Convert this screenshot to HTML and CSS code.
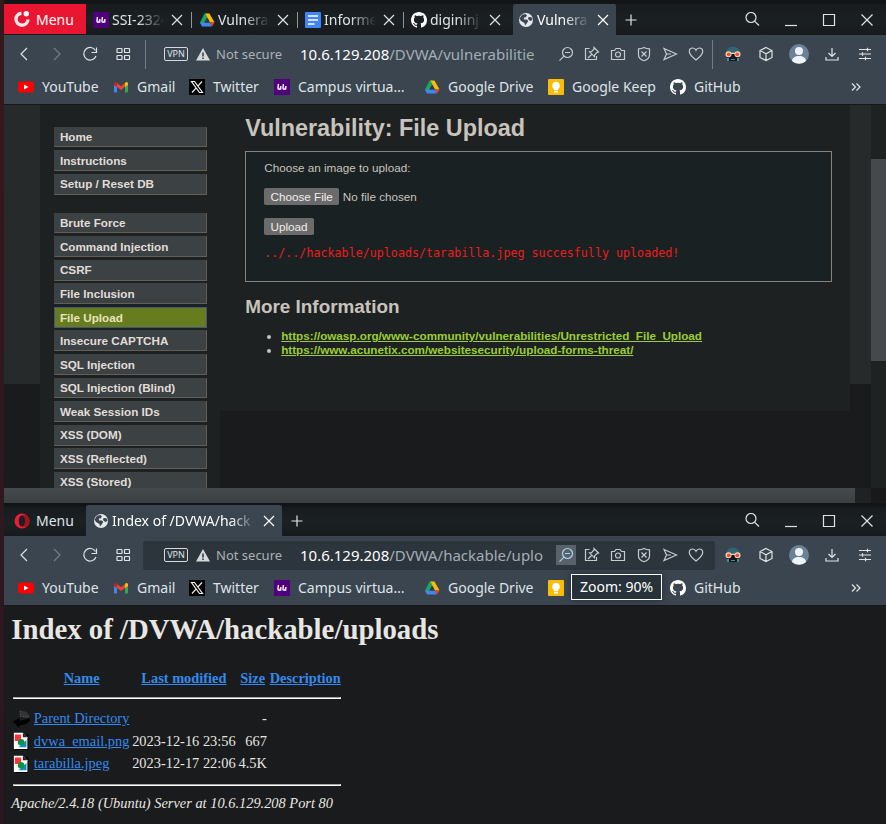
FILE: index.html
```html
<!DOCTYPE html>
<html lang="en">
<head>
<meta charset="utf-8">
<title>Vulnerability: File Upload</title>
<link rel="stylesheet" href="styles.css">
</head>
<body>
<svg class="sprite" aria-hidden="true">
  <symbol id="close" viewBox="0 0 16 16"><path d="M3 3l10 10M13 3L3 13"/></symbol>
  <symbol id="plus" viewBox="0 0 16 16"><path d="M8 2.500v11M2.500 8h11"/></symbol>
  <symbol id="search" viewBox="0 0 16 16"><circle cx="6" cy="5.500" r="5"/><path d="M9.800 9.300L14 13.500"/></symbol>
  <symbol id="min" viewBox="0 0 16 16"><path d="M2 13.500h12"/></symbol>
  <symbol id="max" viewBox="0 0 16 16"><path d="M2.500 2.500h11v11h-11z"/></symbol>
  <symbol id="wclose" viewBox="0 0 16 16"><path d="M2.500 2.500l11 11M13.500 2.500l-11 11"/></symbol>
  <symbol id="back" viewBox="0 0 16 16"><path d="M11 2L5 8l6 6"/></symbol>
  <symbol id="fwd" viewBox="0 0 16 16"><path d="M5 2l6 6-6 6"/></symbol>
  <symbol id="reload" viewBox="0 0 16 16"><path d="M13.500 4.500A6.300 6.300 0 1 0 14 10"/><path d="M14.500 1.500v5h-5"/></symbol>
  <symbol id="grid" viewBox="0 0 16 16"><rect x="2" y="2.500" width="5" height="4" rx=".6"/><rect x="9.500" y="2.500" width="5" height="4" rx=".6"/><rect x="2" y="9.500" width="5" height="4" rx=".6"/><rect x="9.500" y="9.500" width="5" height="4" rx=".6"/></symbol>
  <symbol id="warn" viewBox="0 0 16 16"><path fill="#d5d9db" stroke="none" fill-rule="evenodd" d="M8 2l7 12.500H1zM7.200 6.500v4h1.600v-4zM7.200 11.500v1.600h1.600v-1.600z"/></symbol>
  <symbol id="zoomout" viewBox="0 0 16 16"><circle cx="9.500" cy="6.500" r="5"/><path d="M6 10.200L1.500 14.700M7 6.500h5"/></symbol>
  <symbol id="pin" viewBox="0 0 16 16"><path d="M5.500 2.500h-4v11h11v-3.500"/><path d="M10 1.500l4.500 4.500-1.300.3-2.500 2.500-.2 2-5-5 2-.2L10 3zM7.800 8.300L4 12"/></symbol>
  <symbol id="camera" viewBox="0 0 16 16"><path d="M1.500 4.500h3l1.500-2h4l1.500 2h3v9h-13z"/><circle cx="8" cy="8.500" r="2.500"/></symbol>
  <symbol id="shield" viewBox="0 0 16 16"><path d="M8 1.500c2 1 4 1.300 5.500 1.300V9c0 3-2.500 4.700-5.500 5.700C5 13.700 2.500 12 2.500 9V2.800C4 2.800 6 2.500 8 1.500z"/><path d="M5.500 5.500l5 5M10.500 5.500l-5 5"/></symbol>
  <symbol id="send" viewBox="0 0 16 16"><path d="M2 2.500L14.500 8 2 13.500 4.500 8zM4.500 8H9"/></symbol>
  <symbol id="heart" viewBox="0 0 16 16"><path d="M8 14C3.500 10.500 1.300 8.200 1.300 5.500 1.300 3.300 2.900 2 4.700 2 6.300 2 7.400 2.900 8 4.200 8.600 2.900 9.700 2 11.300 2c1.800 0 3.400 1.300 3.400 3.500C14.700 8.200 12.500 10.500 8 14z"/></symbol>
  <symbol id="mask" viewBox="0 0 16 16"><g stroke="none"><path fill="#2e6874" d="M1.500 7C1.500 3 4 .8 8 .8S14.500 3 14.500 7z"/><path fill="#16191c" d="M2 6h12v5l-1 4H3l-1-4z"/><circle cx="3.500" cy="8.300" r="3" fill="#f4d7bd"/><circle cx="12.500" cy="8.300" r="3" fill="#f4d7bd"/><circle cx="3.700" cy="8.300" r="1.900" fill="#ee5138"/><circle cx="12.300" cy="8.300" r="1.900" fill="#ee5138"/><path fill="#e9d5c5" d="M6 6.500h4v1.500H6z"/><path fill="#3f8e99" d="M2 12h2v3H2zM12 12h2v3h-2zM6 13h4v1H6z"/></g></symbol>
  <symbol id="cube" viewBox="0 0 16 16"><path d="M8 1.500l6 3v7l-6 3-6-3v-7zM2 4.500l6 3.200 6-3.200M8 7.700v6.800"/></symbol>
  <symbol id="avatar" viewBox="0 0 20 20"><g stroke="none"><circle cx="10" cy="10" r="10" fill="#6c8197"/><circle cx="10" cy="7" r="4" fill="#eef3f8"/><path fill="#eef3f8" d="M3 17c0-3 3-5 7-5s7 2 7 5a10 10 0 0 1-14 0z"/></g></symbol>
  <symbol id="download" viewBox="0 0 16 16"><path d="M8 2v8M4.500 7L8 10.500 11.500 7M2 11v3h12v-3"/></symbol>
  <symbol id="sliders" viewBox="0 0 16 16"><path d="M2 3.500h12M2 8h12M2 12.500h12M10.500 1.800v3.400M5.500 6.300v3.400M8.500 10.800v3.400"/></symbol>
  <symbol id="more" viewBox="0 0 16 16"><path d="M4 4.500L7.500 8 4 11.500M8.500 4.500L12 8l-3.500 3.500"/></symbol>
  <symbol id="globe" viewBox="0 0 16 16"><g stroke="none"><circle cx="8" cy="8" r="7" fill="#e4e8eb"/><path fill="#3a4550" d="M4 2.800L7.500 2 9 3.500 7.500 5.500H5.800L6 7.500H9l1.200 1.500L9 11l-2 2.500L6.500 11 3 9 1.500 6.500zM10.500 5l3 .3 1 2.700-2.300 1L10 7z"/></g></symbol>
  <symbol id="drive" viewBox="0 0 16 16"><g stroke="none"><path fill="#1ea362" d="M5.500 1.500h2.800L10 4.500 3.300 14.500 1 10.500z"/><path fill="#fbbc04" d="M6.500 1.500h4l5 9h-4.600z"/><path fill="#4285f4" d="M3.600 10.500H11l1.800 4H3.200L1 10.800z"/><path fill="#ea4335" d="M11 10.500h4.500l-2.500 4z"/><path fill="#303b45" d="M8 5.500l2.800 5H5.200z"/></g></symbol>
  <symbol id="uoc" viewBox="0 0 16 16"><path fill="#50007c" stroke="none" d="M0 0h16v16H0z"/><path stroke="#f4eff7" stroke-width="1.500" d="M4.400 5L4 9q0 1.300 1.200 1.200Q6.300 10 6.500 8.500M6.900 7l-.3 3.800M9.400 5L9 9q0 1.300 1.200 1.200Q11.300 10 11.500 8.500M11.900 7l-.3 3.800"/></symbol>
  <symbol id="docs" viewBox="0 0 16 16"><rect width="16" height="16" rx="1" fill="#4285f4" stroke="none"/><path stroke="#fff" stroke-width="1.600" d="M3 4h10M3 8h10M3 12h6.500"/></symbol>
  <symbol id="github" viewBox="0 0 16 16"><path fill="#fff" stroke="none" d="M8 0C3.580 0 0 3.580 0 8c0 3.540 2.290 6.530 5.470 7.590.4.070.55-.17.55-.38 0-.19-.01-.82-.01-1.490-2.010.37-2.530-.49-2.690-.94-.09-.23-.48-.94-.82-1.130-.28-.15-.68-.52-.01-.53.63-.01 1.080.58 1.230.82.72 1.210 1.870.87 2.330.66.070-.52.28-.87.51-1.070-1.780-.2-3.640-.89-3.640-3.950 0-.87.31-1.590.82-2.150-.08-.2-.36-1.020.08-2.120 0 0 .67-.21 2.200.82.64-.18 1.320-.27 2-.27s1.360.09 2 .27c1.530-1.040 2.200-.82 2.200-.82.44 1.100.16 1.920.08 2.120.51.56.82 1.270.82 2.150 0 3.070-1.870 3.750-3.650 3.950.29.25.54.73.54 1.480 0 1.070-.01 1.930-.01 2.200 0 .21.15.46.55.38A8 8 0 0 0 16 8c0-4.420-3.580-8-8-8z"/></symbol>
  <symbol id="youtube" viewBox="0 0 16 16"><rect y="2.500" width="16" height="11" rx="2.500" fill="#f00" stroke="none"/><path fill="#fff" stroke="none" d="M6 5.500L10.500 8 6 10.500z"/></symbol>
  <symbol id="gmail" viewBox="0 0 16 16"><g stroke="none"><path fill="#4285f4" d="M1 4h3v9.500H2q-1 0-1-1z"/><path fill="#34a853" d="M12 4h3v8.500q0 1-1 1h-2z"/><path fill="#ea4335" d="M4 4l4 3.200L12 4v4L8 11 4 8z"/><path fill="#c5221f" d="M1 4.500Q1 2.500 3 3l1 1v4L1 6z"/><path fill="#fbbc04" d="M15 4.500Q15 2.500 13 3l-1 1v4l3-2z"/></g></symbol>
  <symbol id="xlogo" viewBox="0 0 16 16"><path fill="#000" stroke="none" d="M0 0h16v16H0z"/><path stroke="#f2f2f2" d="M2.500 2.500h3l8 11h-3zM13 2.500L8.800 7.200M7 9.200L3 13.500"/></symbol>
  <symbol id="keep" viewBox="0 0 16 16"><rect width="16" height="16" rx="1" fill="#fbbc04" stroke="none"/><path fill="#fff" stroke="none" d="M8 2.800a3.900 3.900 0 0 0-2 7.200v1.200h4V10a3.900 3.900 0 0 0-2-7.200zM6 12h4v1.500H6z"/></symbol>
  <symbol id="opera-gx" viewBox="0 0 18 18"><path stroke="#ffe8ea" stroke-width="3.400" d="M8.500 3.200A6 6 0 1 0 15 9.500"/><circle cx="13.300" cy="3.800" r="2.700" fill="#fff" stroke="none"/></symbol>
  <symbol id="opera" viewBox="0 0 18 18"><path fill="#f01c35" stroke="none" fill-rule="evenodd" d="M9 1.500a7.500 7.500 0 1 0 0 15 7.500 7.500 0 0 0 0-15zM9 3.500c2 0 3.200 2.500 3.200 5.500S11 14.500 9 14.500 5.800 12 5.800 9 7 3.500 9 3.500z"/><path fill="#a60f22" stroke="none" d="M9 3.500c3-2 7.500 1 7.500 5.500S12 16.500 9 14.500c2 0 3.200-2.500 3.200-5.500S11 3.500 9 3.500z"/></symbol>
  <symbol id="uparrow" viewBox="0 0 20 22"><path fill="#333" stroke="none" d="M8 2q9 0 10 6l-1 3-9-3z"/><path fill="#000" stroke="none" d="M0 14l7-4v3q7 0 11-4l1 4q-5 5-12 5v3z"/><path stroke="#666" stroke-dasharray="1 2" d="M8 2v6l10 1"/></symbol>
  <symbol id="image" viewBox="0 0 20 22"><path fill="#000" stroke="none" d="M3 4h14v17H3z"/><path fill="#fff" stroke="none" d="M1 2h10l5 5v13H1z"/><path fill="#222" stroke="none" d="M11 2l5 5h-5z"/><path fill="#ff3438" stroke="none" d="M2 4h7v7H2z"/><path fill="#168bc9" stroke="none" d="M15 10v8H6z"/><circle cx="9" cy="12.500" r="3.700" fill="#0b9444" stroke="none"/></symbol>
</svg>

<section class="window window-top" aria-label="File upload window">
  <header class="titlebar">
    <button class="menu menu-red"><svg><use href="#opera-gx"/></svg>Menu</button>
    <div class="tab"><svg><use href="#uoc"/></svg><span>SSI-2324</span><button aria-label="Close tab"><svg><use href="#close"/></svg></button></div>
    <div class="tab"><svg><use href="#drive"/></svg><span>Vulnera</span><button aria-label="Close tab"><svg><use href="#close"/></svg></button></div>
    <div class="tab"><svg><use href="#docs"/></svg><span>Informe</span><button aria-label="Close tab"><svg><use href="#close"/></svg></button></div>
    <div class="tab tab-last"><svg><use href="#github"/></svg><span>digininj</span><button aria-label="Close tab"><svg><use href="#close"/></svg></button></div>
    <div class="tab tab-active"><svg><use href="#globe"/></svg><span>Vulnera</span><button aria-label="Close tab"><svg><use href="#close"/></svg></button></div>
    <button class="new-tab" aria-label="New tab"><svg><use href="#plus"/></svg></button>
    <div class="window-controls">
      <button aria-label="Search tabs"><svg><use href="#search"/></svg></button>
      <button aria-label="Minimize"><svg><use href="#min"/></svg></button>
      <button aria-label="Maximize"><svg><use href="#max"/></svg></button>
      <button aria-label="Close"><svg><use href="#wclose"/></svg></button>
    </div>
  </header>
  <nav class="toolbar" aria-label="Navigation">
    <button aria-label="Back"><svg><use href="#back"/></svg></button>
    <button class="dim" aria-label="Forward"><svg><use href="#fwd"/></svg></button>
    <button aria-label="Reload"><svg><use href="#reload"/></svg></button>
    <button aria-label="Speed dial"><svg><use href="#grid"/></svg></button>
    <div class="address address-plain">
      <span class="vpn">VPN</span><svg><use href="#warn"/></svg><span class="insecure">Not secure</span>
      <span class="url"><b>10.6.129.208</b>/DVWA/vulnerabilitie</span>
      <button aria-label="Zoom"><svg><use href="#zoomout"/></svg></button>
      <button aria-label="Pinboard"><svg><use href="#pin"/></svg></button>
      <button aria-label="Snapshot"><svg><use href="#camera"/></svg></button>
      <button aria-label="Tracker blocker"><svg><use href="#shield"/></svg></button>
      <button aria-label="Send"><svg><use href="#send"/></svg></button>
      <button aria-label="Bookmark"><svg><use href="#heart"/></svg></button>
    </div>
    <button aria-label="Mask extension"><svg><use href="#mask"/></svg></button>
    <button aria-label="Extensions"><svg><use href="#cube"/></svg></button>
    <button class="profile" aria-label="Profile"><svg><use href="#avatar"/></svg></button>
    <button aria-label="Downloads"><svg><use href="#download"/></svg></button>
    <button aria-label="Easy setup"><svg><use href="#sliders"/></svg></button>
  </nav>
  <nav class="bookmarks" aria-label="Bookmarks">
    <a href="#"><svg><use href="#youtube"/></svg>YouTube</a>
    <a href="#"><svg><use href="#gmail"/></svg>Gmail</a>
    <a href="#"><svg><use href="#xlogo"/></svg>Twitter</a>
    <a href="#"><svg><use href="#uoc"/></svg>Campus virtua…</a>
    <a href="#"><svg><use href="#drive"/></svg>Google Drive</a>
    <a href="#"><svg><use href="#keep"/></svg>Google Keep</a>
    <a href="#"><svg><use href="#github"/></svg>GitHub</a>
    <button aria-label="More bookmarks"><svg><use href="#more"/></svg></button>
  </nav>
  <div class="view">
    <div class="page dvwa">
      <div class="container">
        <nav class="side" aria-label="DVWA menu">
          <ul>
            <li><a href="#">Home</a></li>
            <li><a href="#">Instructions</a></li>
            <li><a href="#">Setup / Reset DB</a></li>
          </ul>
          <ul>
            <li><a href="#">Brute Force</a></li>
            <li><a href="#">Command Injection</a></li>
            <li><a href="#">CSRF</a></li>
            <li><a href="#">File Inclusion</a></li>
            <li class="selected"><a href="#">File Upload</a></li>
            <li><a href="#">Insecure CAPTCHA</a></li>
            <li><a href="#">SQL Injection</a></li>
            <li><a href="#">SQL Injection (Blind)</a></li>
            <li><a href="#">Weak Session IDs</a></li>
            <li><a href="#">XSS (DOM)</a></li>
            <li><a href="#">XSS (Reflected)</a></li>
            <li><a href="#">XSS (Stored)</a></li>
          </ul>
        </nav>
        <main>
          <h1>Vulnerability: File Upload</h1>
          <form class="upload">
            <label for="file">Choose an image to upload:</label>
            <input id="file" type="file">
            <button type="button">Upload</button>
            <pre>../../hackable/uploads/tarabilla.jpeg succesfully uploaded!</pre>
          </form>
          <h2>More Information</h2>
          <ul class="links">
            <li><a href="#">https://owasp.org/www-community/vulnerabilities/Unrestricted_File_Upload</a></li>
            <li><a href="#">https://www.acunetix.com/websitesecurity/upload-forms-threat/</a></li>
          </ul>
        </main>
      </div>
    </div>
    <div class="vscroll"><div></div></div>
    <div class="hscroll"><div></div></div>
    <div class="corner"></div>
  </div>
</section>

<section class="window window-bottom" aria-label="Index window">
  <header class="titlebar">
    <button class="menu"><svg><use href="#opera"/></svg>Menu</button>
    <div class="tab tab-active tab-wide"><svg><use href="#globe"/></svg><span>Index of /DVWA/hack</span><button aria-label="Close tab"><svg><use href="#close"/></svg></button></div>
    <button class="new-tab" aria-label="New tab"><svg><use href="#plus"/></svg></button>
    <div class="window-controls">
      <button aria-label="Search tabs"><svg><use href="#search"/></svg></button>
      <button aria-label="Minimize"><svg><use href="#min"/></svg></button>
      <button aria-label="Maximize"><svg><use href="#max"/></svg></button>
      <button aria-label="Close"><svg><use href="#wclose"/></svg></button>
    </div>
  </header>
  <nav class="toolbar" aria-label="Navigation">
    <button aria-label="Back"><svg><use href="#back"/></svg></button>
    <button class="dim" aria-label="Forward"><svg><use href="#fwd"/></svg></button>
    <button aria-label="Reload"><svg><use href="#reload"/></svg></button>
    <button aria-label="Speed dial"><svg><use href="#grid"/></svg></button>
    <div class="address">
      <span class="vpn">VPN</span><svg><use href="#warn"/></svg><span class="insecure">Not secure</span>
      <span class="url"><b>10.6.129.208</b>/DVWA/hackable/uplo</span>
      <button class="zoom-on" aria-label="Zoom"><svg><use href="#zoomout"/></svg><span class="tooltip">Zoom: 90%</span></button>
      <button aria-label="Pinboard"><svg><use href="#pin"/></svg></button>
      <button aria-label="Snapshot"><svg><use href="#camera"/></svg></button>
      <button aria-label="Tracker blocker"><svg><use href="#shield"/></svg></button>
      <button aria-label="Send"><svg><use href="#send"/></svg></button>
      <button aria-label="Bookmark"><svg><use href="#heart"/></svg></button>
    </div>
    <button aria-label="Mask extension"><svg><use href="#mask"/></svg></button>
    <button aria-label="Extensions"><svg><use href="#cube"/></svg></button>
    <button class="profile" aria-label="Profile"><svg><use href="#avatar"/></svg></button>
    <button aria-label="Downloads"><svg><use href="#download"/></svg></button>
    <button aria-label="Easy setup"><svg><use href="#sliders"/></svg></button>
  </nav>
  <nav class="bookmarks" aria-label="Bookmarks">
    <a href="#"><svg><use href="#youtube"/></svg>YouTube</a>
    <a href="#"><svg><use href="#gmail"/></svg>Gmail</a>
    <a href="#"><svg><use href="#xlogo"/></svg>Twitter</a>
    <a href="#"><svg><use href="#uoc"/></svg>Campus virtua…</a>
    <a href="#"><svg><use href="#drive"/></svg>Google Drive</a>
    <a href="#" aria-label="Google Keep"><svg><use href="#keep"/></svg></a>
    <a href="#"><svg><use href="#github"/></svg>GitHub</a>
    <button aria-label="More bookmarks"><svg><use href="#more"/></svg></button>
  </nav>
  <div class="page listing">
    <h1>Index of /DVWA/hackable/uploads</h1>
    <table>
      <thead>
        <tr><th></th><th><a href="#">Name</a></th><th><a href="#">Last modified</a></th><th><a href="#">Size</a></th><th><a href="#">Description</a></th></tr>
      </thead>
      <tbody>
        <tr><td colspan="5"><hr></td></tr>
        <tr><td><svg><use href="#uparrow"/></svg></td><td><a href="#">Parent Directory</a></td><td></td><td class="size">-</td><td></td></tr>
        <tr><td><svg><use href="#image"/></svg></td><td><a href="#">dvwa_email.png</a></td><td>2023-12-16 23:56</td><td class="size">667</td><td></td></tr>
        <tr><td><svg><use href="#image"/></svg></td><td><a href="#">tarabilla.jpeg</a></td><td>2023-12-17 22:06</td><td class="size">4.5K</td><td></td></tr>
        <tr><td colspan="5"><hr></td></tr>
      </tbody>
    </table>
    <address>Apache/2.4.18 (Ubuntu) Server at 10.6.129.208 Port 80</address>
  </div>
</section>
</body>
</html>
```
FILE: styles.css
```css
* { box-sizing: border-box; }
body {
  margin: 0;
  min-height: 100vh;
  padding-left: 4px;
  display: flex;
  flex-direction: column;
  background: linear-gradient(#35191d, #2b1721);
  font-family: "Noto Sans", sans-serif;
  font-size: 14px;
  color: #dfe3e6;
}
svg {
  width: 16px;
  height: 16px;
  flex: none;
  display: block;
  fill: none;
  stroke: currentColor;
  stroke-width: 1.2;
}
.sprite { display: none; }
button { font: inherit; color: inherit; background: none; border: 0; padding: 0; }

.window { background: #1a1b1c; }
.window-bottom { flex: 1; }

/* Title bar and tabs */
.titlebar {
  display: flex;
  height: 35px;
  padding-top: 4px;
  background: linear-gradient(#121415 3px, #171b1e 4px, #1b2023 60%, #171a1d);
}
.window-bottom .titlebar { height: 33px; padding-top: 2px; }
.menu {
  width: 82px;
  padding-left: 9px;
  display: flex;
  align-items: center;
  gap: 5px;
}
.menu svg { width: 18px; height: 18px; }
.menu-red { background: #ea1530; color: #fff; height: 30px; }
.tab {
  width: 106px;
  padding: 0 6px 0 7px;
  display: flex;
  align-items: center;
  gap: 3px;
  background: linear-gradient(#8d969c, #8d969c) right center / 1px 16px no-repeat;
}
.tab span {
  flex: 1;
  min-width: 0;
  white-space: nowrap;
  mask-image: linear-gradient(to left, transparent, #000 26px);
}
.tab button { width: 19px; display: flex; justify-content: center; }
.tab-last { background: none; }
.tab-active {
  width: 103px;
  margin-left: 3px;
  padding-left: 5px;
  padding-right: 4px;
  background: #3a4550;
  color: #fff;
  border-radius: 2px 2px 0 0;
}
.tab-wide { width: 196px; margin-left: 0; padding-left: 7px; }
.new-tab { width: 30px; display: flex; align-items: center; justify-content: center; }
.window-controls { display: flex; margin-left: auto; }
.window-controls button { width: 38px; display: flex; align-items: center; justify-content: center; }

/* Address row */
.toolbar {
  display: flex;
  align-items: center;
  height: 38px;
  padding: 0 5px 0 3px;
  background: #3a4550;
}
.toolbar > button { width: 33px; display: flex; justify-content: center; }
.toolbar > .dim { color: #747e87; }
.toolbar > .profile svg { width: 20px; height: 20px; }
.address {
  flex: 1;
  min-width: 0;
  height: 29px;
  margin: 0 1px 0 4px;
  padding: 0 6px 0 21px;
  display: flex;
  align-items: center;
  background: #2d353c;
  border-radius: 2px;
}
.address-plain {
  margin: 0 3px 0 6px;
  padding: 0 3px 0 18px;
  background: none;
  border: solid #737d86;
  border-width: 0 1px;
  border-radius: 0;
}
.address > button { width: 26px; display: flex; justify-content: center; color: #c5cacf; }
.vpn {
  width: 24px;
  height: 14px;
  border: 1px solid #d5d9db;
  border-radius: 2px;
  font-size: 9px;
  line-height: 12px;
  text-align: center;
  margin-right: 7px;
}
.insecure { width: 84px; padding-left: 5px; color: #aab1b7; font-size: 13px; white-space: nowrap; }
.url {
  flex: 1;
  min-width: 0;
  margin: 0 7px 0 5px;
  white-space: nowrap;
  font-size: 15px;
  color: #a3adb7;
}
.url b { font-weight: 400; color: #fff; }
.address > .zoom-on { position: relative; color: #a8d5ee; }
.zoom-on > svg { width: 20px; height: 20px; padding: 2px; background: #59626a; }
.tooltip {
  position: absolute;
  top: 29px;
  left: 18px;
  z-index: 2;
  padding: 2px 8px;
  border: 1px solid #fff;
  background: #28323b;
  color: #fff;
  line-height: 20px;
  white-space: nowrap;
  box-shadow: 0 0 6px #0006;
}

/* Bookmark row */
.bookmarks {
  display: grid;
  grid-template-columns: 95px 76px 85px 150px 124px 122px 1fr 60px;
  align-items: center;
  height: 32px;
  padding: 0 0 4px 14px;
  background: #3a4550;
  border-bottom: 1px solid #14181a;
}
.bookmarks a {
  display: flex;
  align-items: center;
  gap: 8px;
  color: #dfe3e6;
  text-decoration: none;
  white-space: nowrap;
}
.bookmarks button { display: flex; justify-content: center; }

/* Page viewport with its scrollbars */
.view {
  display: grid;
  grid-template-columns: minmax(0, 1fr) 15px;
  grid-template-rows: 383px 15px;
}
.vscroll { background: #1e2223; padding-top: 54px; }
.vscroll div { height: 202px; background: #45494b; }
.hscroll { background: #1e2223; padding-right: 16px; }
.hscroll div { height: 15px; background: linear-gradient(#454b4d, #3b3f41); }
.corner { background: #17191b; }

/* Web pages are shown at the browser zoom level of 90% */
.page { zoom: 90%; }

.dvwa {
  overflow: hidden;
  background: linear-gradient(#262a2b 310px, #1a1b1c 0);
  font-family: "Liberation Sans", Arial, sans-serif;
  font-size: 13px;
  color: #c8c3bc;
}
.container { display: flex; align-items: flex-start; margin: 0 23px 0 40px; }
.side { width: 200px; padding: 24px 14px 0 16px; background: #1e2122; }
.side ul { list-style: none; margin: 0 0 20px; padding: 0; }
.side li {
  margin-bottom: 3px;
  padding: 3px 5px;
  border: 1px solid;
  border-color: #3c4143 #655e55 #655e55 #3c4143;
  background: #3c4143;
  line-height: 15px;
}
.side a { color: #e0ddd9; font-weight: 700; text-decoration: none; }
.side .selected { background: #667c1f; border-color: #46547a; }
.side .selected a { color: #e6e5bd; }
.dvwa main { flex: 1; height: 340px; padding: 10px 20px 0 28px; background: #1e2122; }
.dvwa h1 { margin: 0 0 9px; font-size: 26px; line-height: 32px; }
.dvwa h2 { margin: 15px 0 13px; font-size: 21px; line-height: 24px; }
.upload { height: 146px; padding: 10px 20px; border: 1px solid #898276; background: #1a2122; }
.upload label { display: block; line-height: 15px; margin-bottom: 15px; }
.upload input { display: block; font: inherit; margin-bottom: 14px; height: 19px; }
.upload button, .upload ::file-selector-button {
  display: block;
  height: 19px;
  padding: 0 7px;
  border: 0;
  border-radius: 2px;
  background: #6b6b6b;
  color: #f0eeec;
  font: inherit;
}
.upload ::file-selector-button { display: inline-block; margin-right: 4px; }
.upload pre { margin: 13px 0 0; font: 13px/16px "DejaVu Sans Mono", monospace; color: #ee1c1c; }
.links { margin: 0; padding-left: 40px; line-height: 16px; }
.links a { color: #9acd32; font-weight: 700; }

.listing {
  padding: 8px;
  font-family: "Liberation Serif", "Times New Roman", serif;
  font-size: 16px;
  color: #e8e6e3;
}
.listing h1 { margin: 0 0 24px; font-size: 32px; line-height: 37px; }
.listing a { color: #338aee; }
.listing table { font-size: 16px; }
.listing svg { width: 20px; height: 22px; }
.listing .size { text-align: right; }
.listing hr { margin: 8px 0; border: 1px solid; border-color: #a9a7a4 #fff #fff #a9a7a4; }
```
